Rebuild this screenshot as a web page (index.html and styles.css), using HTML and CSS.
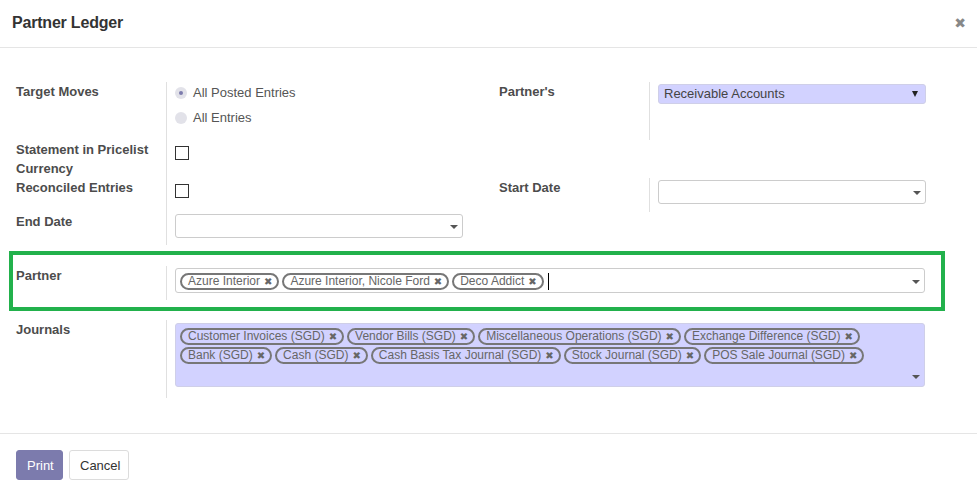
FILE: index.html
```html
<!DOCTYPE html>
<html>
<head>
<meta charset="utf-8">
<link rel="stylesheet" href="styles.css">
</head>
<body>
<div class="modal">
  <header class="modal-header">
    <h4 class="title">Partner Ledger</h4>
    <span class="close">✖</span>
  </header>
  <main class="modal-body">
    <div class="groups">
      <div class="lbl">Target Moves</div>
      <div class="fld">
        <div class="radios">
          <div class="radio-item"><span class="radio checked"></span>All Posted Entries</div>
          <div class="radio-item"><span class="radio"></span>All Entries</div>
        </div>
      </div>
      <div class="lbl lbl-right">Partner's</div>
      <div class="fld fld-right">
        <div class="select req">Receivable Accounts<span class="sel-arrow"></span></div>
      </div>

      <div class="lbl">Statement in Pricelist Currency</div>
      <div class="fld"><span class="checkbox cb-1"></span></div>
      <div class="empty"></div>
      <div class="empty"></div>

      <div class="lbl">Reconciled Entries</div>
      <div class="fld"><span class="checkbox cb-2"></span></div>
      <div class="lbl lbl-right">Start Date</div>
      <div class="fld fld-right"><div class="input date-right"><span class="caret"></span></div></div>

      <div class="lbl">End Date</div>
      <div class="fld"><div class="input date-left"><span class="caret"></span></div></div>
      <div class="empty"></div>
      <div class="empty"></div>
    </div>

    <div class="highlight">
      <div class="row partner-row">
        <div class="lbl">Partner</div>
        <div class="fld">
          <div class="input many2many">
            <div class="tags">
              <span class="tag">Azure Interior<span class="x">✖</span></span>
              <span class="tag">Azure Interior, Nicole Ford<span class="x">✖</span></span>
              <span class="tag">Deco Addict<span class="x">✖</span></span>
              <span class="cursor"></span>
            </div>
            <span class="caret"></span>
          </div>
        </div>
      </div>
    </div>

    <div class="row journals-row">
      <div class="lbl">Journals</div>
      <div class="fld">
        <div class="input many2many journals">
          <div class="tags">
            <span class="tag">Customer Invoices (SGD)<span class="x">✖</span></span>
            <span class="tag">Vendor Bills (SGD)<span class="x">✖</span></span>
            <span class="tag">Miscellaneous Operations (SGD)<span class="x">✖</span></span>
            <span class="tag">Exchange Difference (SGD)<span class="x">✖</span></span>
            <span class="tag">Bank (SGD)<span class="x">✖</span></span>
            <span class="tag">Cash (SGD)<span class="x">✖</span></span>
            <span class="tag">Cash Basis Tax Journal (SGD)<span class="x">✖</span></span>
            <span class="tag">Stock Journal (SGD)<span class="x">✖</span></span>
            <span class="tag">POS Sale Journal (SGD)<span class="x">✖</span></span>
          </div>
          <span class="caret caret-bottom"></span>
        </div>
      </div>
    </div>
  </main>
  <footer class="modal-footer">
    <button class="btn btn-primary">Print</button>
    <button class="btn btn-secondary">Cancel</button>
  </footer>
</div>
</body>
</html>
```

FILE: styles.css
```css
* { box-sizing: border-box; }
html, body { margin: 0; padding: 0; background: #fff; }
body {
  font-family: "Liberation Sans", Arial, sans-serif;
  font-size: 13px;
  color: #4c4c4c;
}
.modal { width: 977px; }

.modal-header {
  height: 48px;
  border-bottom: 1px solid #e5e5e5;
  display: flex;
  align-items: center;
  justify-content: space-between;
  padding: 0 11px 2px 12px;
}
.title {
  margin: 0;
  font-size: 16px;
  font-weight: bold;
  color: #333;
  letter-spacing: -0.2px;
}
.close {
  font-family: "DejaVu Sans", sans-serif;
  font-size: 14px;
  color: #888;
}

.modal-body { padding: 34px 16px 35px 16px; }

.groups {
  display: grid;
  grid-template-columns: 150px 324px 159px 312px;
  grid-template-rows: 58px 38px 34px 33px;
}
.lbl {
  font-weight: bold;
  color: #4c4c4c;
  line-height: 19px;
  padding-top: 0;
}
.lbl-right { padding-left: 9px; }
.fld {
  border-left: 1px solid #e0e0e0;
  padding-left: 8px;
}

.radios { padding-top: 1px; }
.radio-item {
  display: flex;
  align-items: center;
  line-height: 19px;
  height: 19px;
  margin-bottom: 6px;
  color: #555;
}
.radio {
  width: 12px;
  height: 12px;
  border-radius: 50%;
  background: #e2e2e9;
  margin-right: 6px;
  position: relative;
}
.radio.checked::after {
  content: "";
  position: absolute;
  left: 4px;
  top: 4px;
  width: 4px;
  height: 4px;
  border-radius: 50%;
  background: #7c7bad;
}

.checkbox {
  display: block;
  width: 14px;
  height: 14px;
  border: 1px solid #333;
  background: #fff;
}
.cb-1 { margin-top: 6px; }
.cb-2 { margin-top: 6px; }

.input {
  border: 1px solid #ccc;
  border-radius: 3px;
  background: #fff;
  display: flex;
  align-items: center;
  justify-content: flex-end;
}
.select {
  margin-top: 2px;
  height: 20px;
  border: 1px solid #cfcfe8;
  border-radius: 3px;
  padding: 0 7px 0 5px;
  line-height: 18px;
  color: #444;
  display: flex;
  align-items: center;
  justify-content: space-between;
  width: 268px;
}
.req { background: #d2d2ff; }
.sel-arrow {
  width: 0; height: 0;
  border-left: 3px solid transparent;
  border-right: 3px solid transparent;
  border-top: 6px solid #222;
}
.caret {
  width: 0; height: 0;
  border-left: 4px solid transparent;
  border-right: 4px solid transparent;
  border-top: 4px solid #555;
  margin-right: 4px;
  margin-top: 2px;
}
.date-right { margin-top: 2px; width: 268px; height: 24px; }
.date-left { margin-top: 2px; width: 288px; height: 24px; }

.highlight {
  margin: 6px 16px 0 -7px;
  border: 4px solid #22b14c;
  padding: 11px 0 7px 3px;
}
.row {
  display: grid;
  grid-template-columns: 150px 1fr;
}
.partner-row { height: 34px; }
.partner-row .fld { padding-top: 2px; }
.many2many {
  width: 750px;
  justify-content: space-between;
}
.partner-row .many2many { height: 25px; padding: 1px 0 0 4px; }
.tags {
  display: flex;
  flex-wrap: wrap;
  gap: 2px 3px;
  align-items: center;
}
.tag {
  display: inline-flex;
  align-items: center;
  height: 17px;
  border: 2px solid #777;
  border-radius: 9px;
  padding: 0 5px 0 6px;
  font-size: 12px;
  line-height: 13px;
  color: #666;
  white-space: nowrap;
}
.tag .x {
  font-family: "DejaVu Sans", sans-serif;
  font-size: 10px;
  color: #666;
  margin-left: 4px;
}
.cursor {
  width: 1px;
  height: 17px;
  background: #000;
  margin-left: 1px;
}

.journals-row { margin-top: 9px; height: 78px; }
.journals-row .fld { padding-top: 3px; }
.input.journals {
  height: 64px;
  align-items: flex-start;
  padding: 4px 0 0 4px;
  background: #d2d2ff;
  border-color: #cfcfe8;
}
.journals .tags { width: 690px; }
.caret-bottom { align-self: flex-end; margin-bottom: 7px; }

.modal-footer {
  border-top: 1px solid #e5e5e5;
  padding: 16px 16px 22px 16px;
  display: flex;
  gap: 6px;
}
.btn {
  font-family: "Liberation Sans", Arial, sans-serif;
  font-size: 13px;
  height: 30px;
  border-radius: 3px;
  padding: 0 10px;
  cursor: pointer;
}
.btn-primary {
  background: #7c7bad;
  border: 1px solid #7c7bad;
  color: #fff;
  width: 47px;
}
.btn-secondary {
  background: #fff;
  border: 1px solid #dcdcdc;
  color: #333;
  width: 60px;
}
```
